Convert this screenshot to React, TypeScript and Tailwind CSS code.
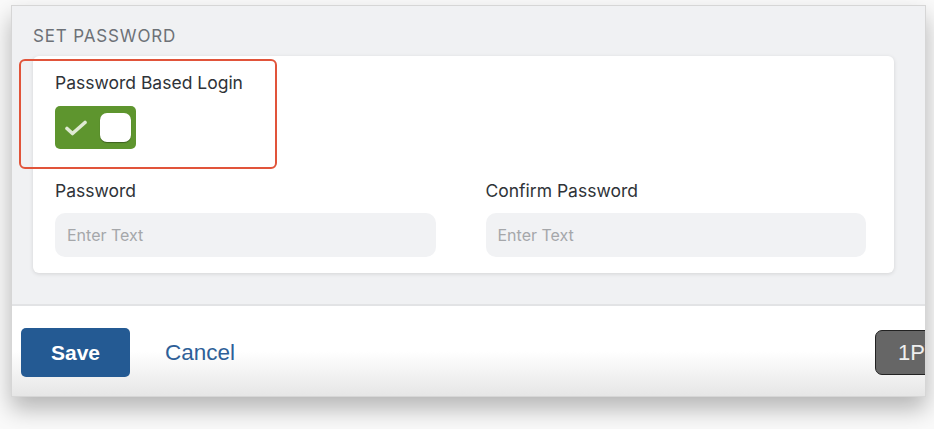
export default function App() {
  return (
    <div className="w-[934px] h-[429px] bg-[#fafafa] pt-[5px] pl-[11px] font-['Inter',sans-serif]">
      <div className="w-[915px] h-[392px] flex flex-col overflow-hidden border border-[#d6d6d6] bg-[#f0f1f3] shadow-[0_12px_22px_rgba(0,0,0,0.28)]">
        <div className="pl-[21px] pr-[31px] pt-[20px] h-[298px]">
          <h2 className="text-[17px] leading-[20px] tracking-[0.05em] uppercase text-[#6d7177]">Set Password</h2>
          <div className="relative mt-[10px] bg-white rounded-[6px] shadow-[0_1px_4px_rgba(0,0,0,0.12)] pl-[22px] pr-[28px] pt-[16px] pb-[16px]">
            <div className="absolute left-[-14px] top-[3px] w-[258px] h-[110px] rounded-[6px] border-2 border-[#e1543a] pointer-events-none" />
            <div className="text-[17.5px] leading-[22px] text-[#2f3338]">Password Based Login</div>
            <div className="mt-[12px] w-[81px] h-[43px] rounded-[5px] bg-[#5e952e] flex items-center justify-between pl-[9px] pr-[5px]">
              <svg width="24" height="16" viewBox="0 0 24 16" className="mt-[1px]">
                <path d="M3 8.5l5.5 5L21 2.5" fill="none" stroke="#dfead3" strokeWidth="3.6" strokeLinecap="round" strokeLinejoin="round" />
              </svg>
              <div className="w-[31px] h-[29px] rounded-[7px] bg-white shadow-[0_1px_1px_rgba(0,0,0,0.35)]" />
            </div>
            <div className="mt-[31px] grid grid-cols-2 gap-x-[50px]">
              <div>
                <div className="text-[17.5px] leading-[22px] text-[#2f3338]">Password</div>
                <div className="mt-[11px] h-[44px] rounded-[10px] bg-[#f1f2f4] flex items-center pl-[12px] text-[16px] text-[#a5a7aa]">Enter Text</div>
              </div>
              <div>
                <div className="text-[17.5px] leading-[22px] text-[#2f3338]">Confirm Password</div>
                <div className="mt-[11px] h-[44px] rounded-[10px] bg-[#f1f2f4] flex items-center pl-[12px] text-[16px] text-[#a5a7aa]">Enter Text</div>
              </div>
            </div>
          </div>
        </div>
        <div className="flex-1 border-t-2 border-[#e2e3e5] bg-gradient-to-b from-white via-white to-[#e6e6e6] flex items-start pt-[22px] pl-[9px] font-['Liberation_Sans',Arial,sans-serif]">
          <button className="w-[109px] h-[49px] rounded-[5px] bg-[#245a93] text-white text-[21px] font-bold">Save</button>
          <button className="ml-[35px] h-[49px] text-[22.5px] text-[#2e5f98]">Cancel</button>
          <div className="ml-auto mr-[-40px] mt-[2px] w-[90px] h-[45px] rounded-[7px] border-[1.5px] border-[#222] bg-[#666] text-[#eee] text-[22px] flex items-center pl-[22px]">1PW</div>
        </div>
      </div>
    </div>
  );
}
